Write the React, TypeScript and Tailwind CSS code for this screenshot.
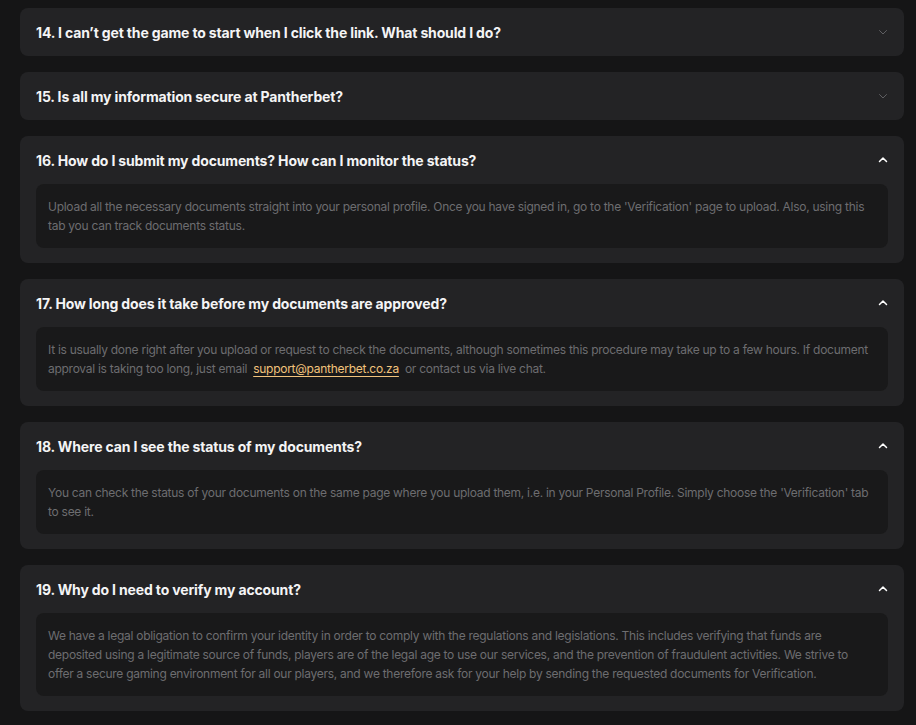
import React from "react";

type Item = { q: string; open: boolean; a?: React.ReactNode };

const Chevron = ({ up }: { up: boolean }) => (
  <svg
    width="12"
    height="12"
    viewBox="0 0 24 24"
    fill="none"
    stroke="currentColor"
    strokeWidth={up ? 3 : 2}
    strokeLinecap="round"
    strokeLinejoin="round"
    className={up ? "text-white" : "text-[#5f5f62]"}
  >
    {up ? <path d="M5 15l7-7 7 7" /> : <path d="M5 9l7 7 7-7" />}
  </svg>
);

const items: Item[] = [
  { q: "14. I can\u2019t get the game to start when I click the link. What should I do?", open: false },
  { q: "15. Is all my information secure at Pantherbet?", open: false },
  {
    q: "16. How do I submit my documents? How can I monitor the status?",
    open: true,
    a: (
      <>
        Upload all the necessary documents straight into your personal profile. Once you have signed in, go to the
        'Verification' page to upload. Also, using this tab you can track documents status.
      </>
    ),
  },
  {
    q: "17. How long does it take before my documents are approved?",
    open: true,
    a: (
      <>
        It is usually done right after you upload or request to check the documents, although sometimes this procedure
        may take up to a few hours. If document approval is taking too long, just email
        <a className="mx-[6px] text-[#f2c37c] underline decoration-1 underline-offset-[3px]" href="#">
          support@pantherbet.co.za
        </a>
        or contact us via live chat.
      </>
    ),
  },
  {
    q: "18. Where can I see the status of my documents?",
    open: true,
    a: (
      <>
        You can check the status of your documents on the same page where you upload them, i.e. in your Personal
        Profile. Simply choose the 'Verification' tab to see it.
      </>
    ),
  },
  {
    q: "19. Why do I need to verify my account?",
    open: true,
    a: (
      <>
        We have a legal obligation to confirm your identity in order to comply with the regulations and legislations.
        This includes verifying that funds are deposited using a legitimate source of funds, players are of the legal
        age to use our services, and the prevention of fraudulent activities. We strive to offer a secure gaming
        environment for all our players, and we therefore ask for your help by sending the requested documents for
        Verification.
      </>
    ),
  },
];

export default function App() {
  return (
    <div
      className="min-h-[725px] w-full bg-[#151516] pl-5 pr-3 pt-2 pb-4"
      style={{ fontFamily: "Inter, 'Noto Sans', sans-serif" }}
    >
      <div className="flex flex-col gap-4">
        {items.map((it, i) => (
          <div key={i} className="rounded-lg bg-[#232325]">
            <div className="flex h-12 items-center justify-between px-4">
              <span className="text-[14px] font-bold tracking-[-0.15px] text-[#f4f4f5]">{it.q}</span>
              <span className="mr-[-3px] flex h-4 w-4 items-center justify-center">
                <Chevron up={it.open} />
              </span>
            </div>
            {it.open && (
              <div className="px-4 pb-[15px]">
                <div className="rounded-lg bg-[#19191a] px-3 pt-[13px] pb-[13px] text-[12px] leading-[19px] tracking-[-0.27px] text-[#6d6d70]">
                  {it.a}
                </div>
              </div>
            )}
          </div>
        ))}
      </div>
    </div>
  );
}
